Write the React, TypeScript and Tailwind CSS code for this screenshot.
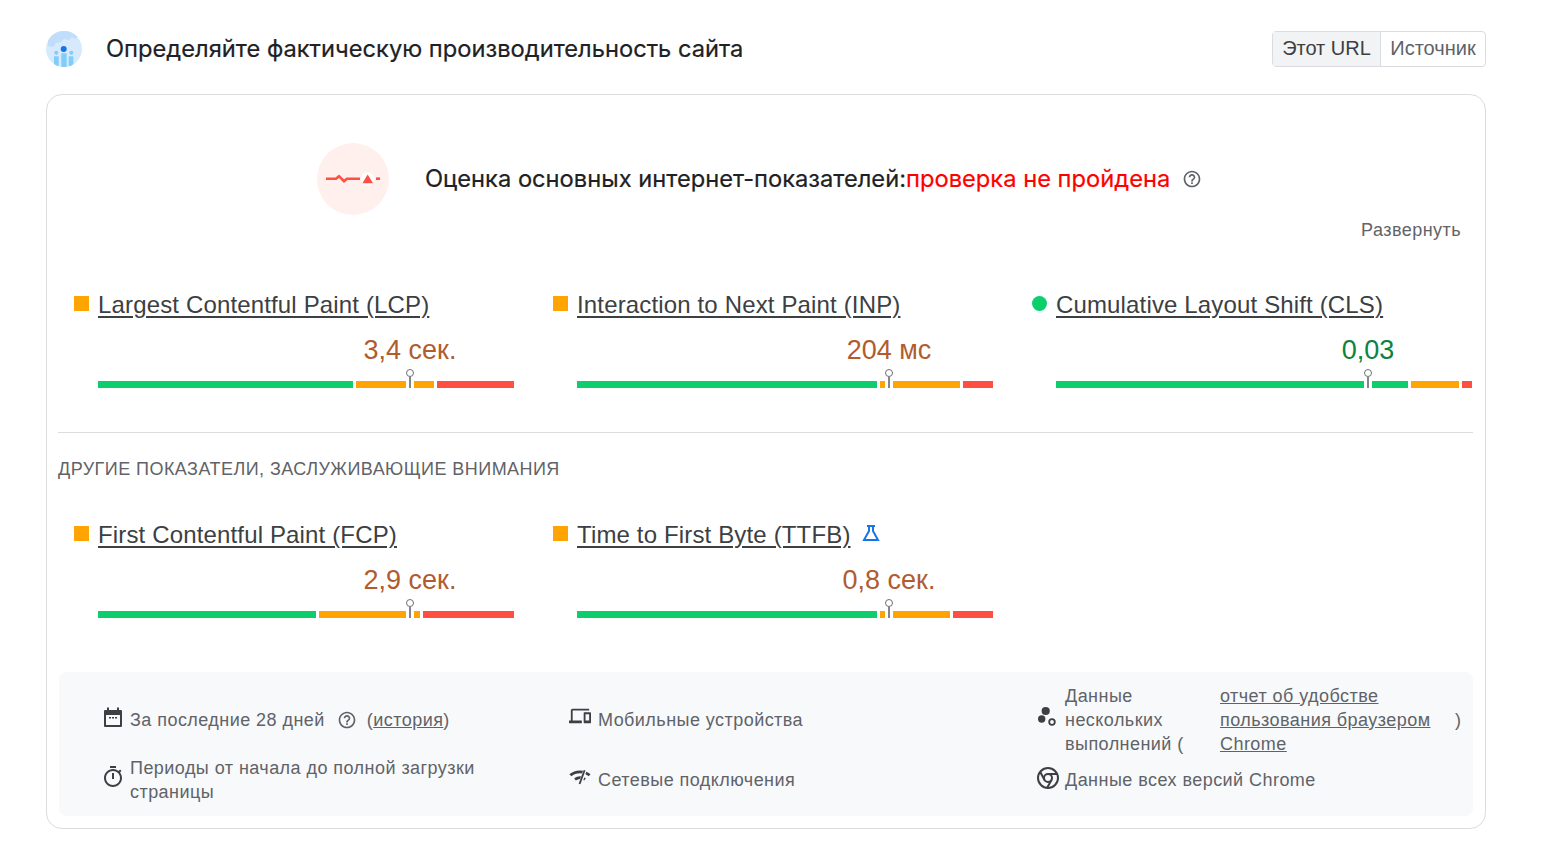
const GREEN = '#0cce6b';
const ORANGE = '#ffa400';
const RED = '#ff4e42';

interface Metric {
  name: string;
  value: string;
  good?: boolean;
  pos: number;
  segs: [number, string][];
  flask?: boolean;
}

const row1: Metric[] = [
  { name: 'Largest Contentful Paint (LCP)', value: '3,4 сек.', pos: 312, segs: [[255, GREEN], [78, ORANGE], [77, RED]] },
  { name: 'Interaction to Next Paint (INP)', value: '204 мс', pos: 312, segs: [[300, GREEN], [80, ORANGE], [30, RED]] },
  { name: 'Cumulative Layout Shift (CLS)', value: '0,03', good: true, pos: 312, segs: [[352, GREEN], [48, ORANGE], [10, RED]] },
];

const row2: Metric[] = [
  { name: 'First Contentful Paint (FCP)', value: '2,9 сек.', pos: 312, segs: [[218, GREEN], [101, ORANGE], [91, RED]] },
  { name: 'Time to First Byte (TTFB)', value: '0,8 сек.', pos: 312, flask: true, segs: [[300, GREEN], [70, ORANGE], [40, RED]] },
];

function HelpIcon({ className }: { className: string }) {
  return (
    <svg viewBox="0 0 24 24" className={className} fill="currentColor">
      <path d="M11 18h2v-2h-2v2zm1-16C6.48 2 2 6.48 2 12s4.48 10 10 10 10-4.48 10-10S17.52 2 12 2zm0 18c-4.41 0-8-3.59-8-8s3.59-8 8-8 8 3.59 8 8-3.59 8-8 8zm0-14c-2.21 0-4 1.79-4 4h2c0-1.1.9-2 2-2s2 .9 2 2c0 2-3 1.75-3 5h2c0-2.25 3-2.5 3-5 0-2.21-1.79-4-4-4z" />
    </svg>
  );
}

function Logo() {
  return (
    <svg viewBox="0 0 36 36" className="w-9 h-9 shrink-0">
      <defs>
        <clipPath id="globe">
          <circle cx="18" cy="18" r="18" />
        </clipPath>
      </defs>
      <g clipPath="url(#globe)">
        <rect width="36" height="36" fill="#d6e9fd" />
        <path d="M10 0h20l3 5-4 3-3-2-3 3-5-1-3 3-5 1-3 4-5-1V6z" fill="#c0defb" />
        <rect x="8" y="25.300" width="4.700" height="12" fill="#7fcdf8" />
        <rect x="15.300" y="22.300" width="5.400" height="15" fill="#7fcdf8" />
        <rect x="22.700" y="25.300" width="4.600" height="12" fill="#7fcdf8" />
      </g>
      <circle cx="10.300" cy="21.700" r="2" fill="#7fcdf8" />
      <circle cx="25.300" cy="21.700" r="2" fill="#7fcdf8" />
      <circle cx="17.700" cy="18" r="3" fill="#1a73e8" />
    </svg>
  );
}

function StatusIcon() {
  return (
    <div className="w-[72px] h-[72px] rounded-full bg-[#fff0ee] flex items-center justify-center shrink-0">
      <svg viewBox="0 0 72 72" className="w-[72px] h-[72px]">
        <path d="M9 35.700h10l3-2.500 5 5 3-2.500h13" fill="none" stroke={RED} strokeWidth="2.600" />
        <path d="M59 35.700h4" fill="none" stroke={RED} strokeWidth="2.600" />
        <circle cx="50.700" cy="36" r="6.800" fill="#ffffff" />
        <path d="M50.700 31.500l5.300 8.700h-10.600z" fill={RED} />
      </svg>
    </div>
  );
}

function FlaskIcon() {
  return (
    <svg viewBox="0 0 18 18" className="w-[18px] h-[18px] ml-[11px] mt-[-4px]" fill="none" stroke="#1a73e8" strokeWidth="2">
      <path d="M5 2h8M7 2v5L2 16h14L11 7V2" />
    </svg>
  );
}

function MetricCard({ m }: { m: Metric }) {
  return (
    <div className="flex pl-4">
      <div className="w-6 shrink-0 pt-[3px]">
        <div className={m.good ? 'w-[15px] h-[15px] rounded-full bg-[#0cce6b]' : 'w-[15px] h-[15px] bg-[#ffa400]'} />
      </div>
      <div className="w-[416px]">
        <div className="flex items-center h-6 whitespace-nowrap">
          <span className="text-[24px] leading-6 tracking-[0.15px] text-[#3c4043] underline decoration-[1.500px] underline-offset-[3px]">{m.name}</span>
          {m.flask && <FlaskIcon />}
        </div>
        <div className="h-[36px] mt-[15px] w-0 flex flex-col items-center" style={{ marginLeft: m.pos }}>
          <span className={m.good ? 'text-[27px] leading-[36px] whitespace-nowrap text-[#0c8243]' : 'text-[27px] leading-[36px] whitespace-nowrap text-[#b15c2f]'}>{m.value}</span>
        </div>
        <div className="relative flex gap-[3px] h-[7px] mt-[13px]">
          {m.segs.map(([w, c], i) => (
            <div key={i} className="h-[7px]" style={{ width: w, backgroundColor: c }} />
          ))}
          <div className="absolute top-0 w-2 h-[7px] bg-white" style={{ left: m.pos - 4 }} />
          <div className="absolute top-[-12px] w-2 flex flex-col items-center" style={{ left: m.pos - 4 }}>
            <div className="w-2 h-2 rounded-full border border-[#6d7175] bg-white" />
            <div className="w-[2px] h-[11px] bg-[#80868b]" />
          </div>
        </div>
      </div>
    </div>
  );
}

function Meta({ icon, children }: { icon: React.ReactNode; children: React.ReactNode }) {
  return (
    <div className="flex items-center text-[18px] leading-6 tracking-[0.45px] text-[#5f6368]">
      <div className="w-7 h-6 shrink-0 text-[#3c4043] flex items-center">{icon}</div>
      {children}
    </div>
  );
}

export default function App() {
  return (
    <div className="bg-white min-h-[855px] pl-[46px] pt-[31px] font-['Liberation_Sans',Arial,sans-serif]">
      <div className="w-[1440px]">
        <div className="flex items-center justify-between h-9">
          <div className="flex items-center">
            <Logo />
            <h1 className="ml-6 text-[23.700px] text-[#202124] [-webkit-text-stroke:0.2px_#202124] font-['Inter','Liberation_Sans',sans-serif]">
              Определяйте фактическую производительность сайта
            </h1>
          </div>
          <div className="flex h-9 border border-[#dadce0] rounded text-[20px] leading-[32px]">
            <div className="w-[108px] text-center bg-[#f1f3f4] text-[#3c4043] border-r border-[#dadce0]">Этот URL</div>
            <div className="w-[104px] text-center text-[#5f6368]">Источник</div>
          </div>
        </div>

        <div className="mt-[27px] h-[735px] border border-[#dadce0] rounded-2xl pl-[11px] pr-3">
          <div className="flex items-center mt-[48px] ml-[259px] h-[72px]">
            <StatusIcon />
            <div className="ml-9 text-[23.700px] text-[#202124] [-webkit-text-stroke:0.2px] whitespace-nowrap font-['Inter','Liberation_Sans',sans-serif]">
              Оценка основных интернет-показателей:<span className="text-[#ff0000]">проверка не пройдена</span>
            </div>
            <HelpIcon className="w-5 h-5 ml-3 text-[#5f6368]" />
          </div>
          <div className="text-right text-[18px] leading-6 tracking-[0.45px] text-[#5f6368] mt-[3px] pr-3">Развернуть</div>

          <div className="grid grid-cols-[479px_479px_1fr] mt-[51px] pb-[44px] border-b border-[#dadce0]">
            {row1.map((m) => (
              <MetricCard key={m.name} m={m} />
            ))}
          </div>

          <div className="text-[18px] leading-6 tracking-[0.45px] text-[#5f6368] mt-6">ДРУГИЕ ПОКАЗАТЕЛИ, ЗАСЛУЖИВАЮЩИЕ ВНИМАНИЯ</div>

          <div className="grid grid-cols-[479px_479px_1fr] mt-[42px]">
            {row2.map((m) => (
              <MetricCard key={m.name} m={m} />
            ))}
          </div>

          <div className="mt-[54px] ml-px h-[144px] bg-[#f8f9fb] rounded-lg py-3 pl-[42px] grid grid-cols-[468px_468px_1fr] grid-rows-[72px_48px]">
            <Meta
              icon={
                <svg viewBox="0 0 24 24" className="w-6 h-6 -mt-[5px]" fill="currentColor">
                  <path d="M6 1.500h2V4h8V1.500h2V4h2a1 1 0 0 1 1 1v15a1 1 0 0 1-1 1H4a1 1 0 0 1-1-1V5a1 1 0 0 1 1-1h2zM5 9v10h14V9zm3 2h2v1.500H8zm3 0h2v1.500h-2zm3 0h2v1.500h-2z" />
                </svg>
              }
            >
              <span className="ml-px">За последние 28 дней</span>
              <HelpIcon className="w-5 h-5 ml-3 text-[#5f6368]" />
              <span className="ml-[10px]">
                (<span className="underline">история</span>)
              </span>
            </Meta>
            <Meta
              icon={
                <svg viewBox="0 0 24 24" className="w-[22px] h-[22px] -mt-2" fill="currentColor">
                  <path d="M4 6h18V4H4c-1.100 0-2 .9-2 2v11H0v3h14v-3H4V6zm19 2h-6c-.55 0-1 .45-1 1v10c0 .55.45 1 1 1h6c.55 0 1-.45 1-1V9c0-.55-.45-1-1-1zm-1 9h-4v-7h4v7z" />
                </svg>
              }
            >
              <span className="ml-px">Мобильные устройства</span>
            </Meta>
            <div className="flex items-center text-[18px] leading-6 tracking-[0.45px] text-[#5f6368]">
              <div className="w-7 h-6 shrink-0 text-[#3c4043]">
                <svg viewBox="0 0 24 24" className="w-6 h-6 overflow-visible" fill="currentColor">
                  <circle cx="8.700" cy="3" r="4.100" />
                  <circle cx="4.700" cy="11" r="3.700" />
                  <circle cx="15" cy="14" r="2.800" fill="none" stroke="currentColor" strokeWidth="1.800" />
                </svg>
              </div>
              <span className="w-[155px] shrink-0">Данные нескольких выполнений (</span>
              <span className="w-[235px] shrink-0 underline">отчет об удобстве пользования браузером Chrome</span>
              <span>)</span>
            </div>
            <Meta
              icon={
                <svg viewBox="0 0 24 24" className="w-6 h-6 -mt-[6px]" fill="currentColor">
                  <path d="M15 1H9v2h6V1zm-4 13h2V8h-2v6zm8.030-6.610l1.420-1.420c-.43-.51-.9-.99-1.410-1.410l-1.420 1.420C16.070 4.740 14.120 4 12 4c-4.970 0-9 4.030-9 9s4.020 9 9 9 9-4.030 9-9c0-2.120-.74-4.070-1.970-5.610zM12 20c-3.870 0-7-3.130-7-7s3.130-7 7-7 7 3.130 7 7-3.130 7-7 7z" />
                </svg>
              }
            >
              <span className="ml-px w-[360px]">Периоды от начала до полной загрузки страницы</span>
            </Meta>
            <Meta
              icon={
                <svg viewBox="0 0 24 24" className="w-[22px] h-[22px] -mt-1" fill="none" stroke="currentColor">
                  <path d="M1.500 9C7 4 17 4 22.500 9" strokeWidth="3" />
                  <path d="M6.500 13.500c3.500-2.500 7.500-2.500 11 0" strokeWidth="3" />
                  <path d="M17.500 3.500L12 19" stroke="#f8f9fb" strokeWidth="3.800" />
                  <path d="M17 3.500L11.500 18.500" strokeWidth="2" />
                </svg>
              }
            >
              <span className="ml-px">Сетевые подключения</span>
            </Meta>
            <div className="flex items-center text-[18px] leading-6 tracking-[0.45px] text-[#5f6368]">
              <div className="w-7 h-6 shrink-0 text-[#3c4043]">
                <svg viewBox="0 0 24 24" className="w-6 h-6 -mt-0.5 -ml-px" fill="none" stroke="currentColor" strokeWidth="2">
                  <circle cx="12" cy="12" r="10" />
                  <circle cx="12" cy="12" r="4" />
                  <path d="M12 8h9M15.500 14L11 22M8.500 14L4 5.500" />
                </svg>
              </div>
              <span>Данные всех версий Chrome</span>
            </div>
          </div>
        </div>
      </div>
    </div>
  );
}
